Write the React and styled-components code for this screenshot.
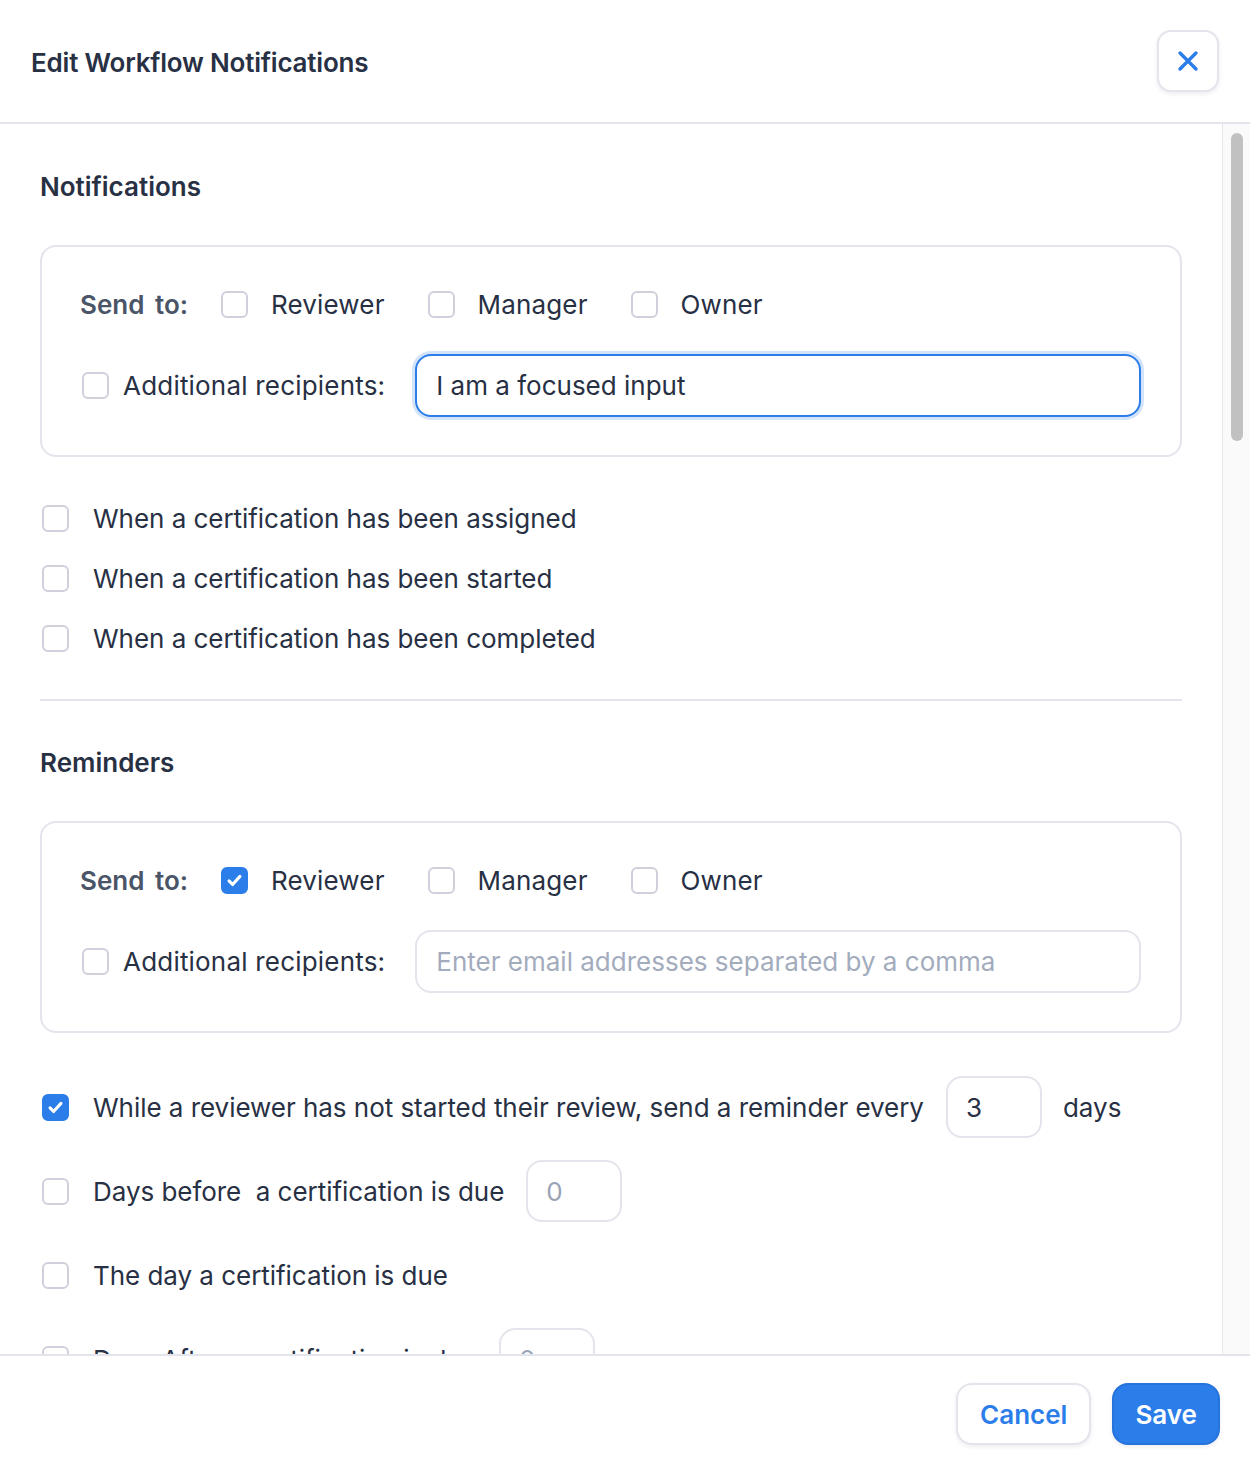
import React, { useState } from "react";
import styled, { createGlobalStyle } from "styled-components";

const blue = "#2b7de9";
const ink = "#283044";
const line = "#e4e4ec";

const GlobalStyle = createGlobalStyle`
  html, body {
    margin: 0;
    padding: 0;
    background: #ffffff;
  }
  body {
    font-family: Inter, "Noto Sans", sans-serif;
    color: ${ink};
  }
  * {
    box-sizing: border-box;
  }
`;

const Modal = styled.div`
  width: 1250px;
  height: 1474px;
  display: flex;
  flex-direction: column;
  background: #fff;
`;

const Header = styled.header`
  height: 124px;
  flex-shrink: 0;
  display: flex;
  align-items: center;
  justify-content: space-between;
  padding: 0 31px;
  border-bottom: 2px solid ${line};
`;

const Title = styled.h1`
  margin: 3px 0 0;
  font-size: 26px;
  font-weight: 600;
  letter-spacing: -0.2px;
  color: ${ink};
`;

const CloseButton = styled.button`
  width: 62px;
  height: 62px;
  display: flex;
  align-items: center;
  justify-content: center;
  border: 2px solid ${line};
  border-radius: 14px;
  background: #fff;
  box-shadow: 0 2px 4px rgba(20, 30, 60, 0.08);
  color: ${blue};
  padding: 0;
`;

const Main = styled.div`
  flex: 1;
  min-height: 0;
  display: flex;
`;

const Body = styled.div`
  flex: 1;
  overflow: hidden;
`;

/* custom scrollbar rail, the thumb sits at the top since the view is unscrolled */
const ScrollTrack = styled.div`
  width: 28px;
  flex-shrink: 0;
  background: #fafafa;
  border-left: 1px solid #e8e8e8;
  padding: 9px 7px 0 8px;
`;

const ScrollThumb = styled.div`
  height: 308px;
  border-radius: 6px;
  background: #c1c1c1;
`;

const Form = styled.div`
  padding: 47px 40px 0;
  display: flex;
  flex-direction: column;
`;

const SectionTitle = styled.h2`
  margin: 0 0 42px;
  font-size: 26px;
  line-height: 32px;
  font-weight: 600;
  color: ${ink};
`;

const RecipientCard = styled.div`
  border: 2px solid ${line};
  border-radius: 16px;
  padding: 44px 39px 38px 38px;
  display: flex;
  flex-direction: column;
  gap: 36px;
`;

const SendRow = styled.div`
  display: flex;
  align-items: center;
  height: 27px;
`;

const SendLabel = styled.span`
  font-size: 26px;
  font-weight: 600;
  color: #4a5568;
  word-spacing: 4px;
  margin-right: 33px;
`;

const Choice = styled.label`
  display: flex;
  align-items: center;
  gap: 23px;
  margin-right: 43px;
  font-size: 26px;
  letter-spacing: 0.15px;
  color: ${ink};
`;

const Box = styled.span`
  width: 27px;
  height: 27px;
  flex-shrink: 0;
  border-radius: 6px;
  border: 2px solid ${(p) => (p.$checked ? blue : "#cfd0dc")};
  background: ${(p) => (p.$checked ? blue : "#fff")};
  display: flex;
  align-items: center;
  justify-content: center;
  margin-left: ${(p) => p.$inset || 0}px;
`;

const ExtraRow = styled.div`
  display: flex;
  align-items: center;
`;

const ExtraLabel = styled.label`
  display: flex;
  align-items: center;
  gap: 14px;
  font-size: 26px;
  letter-spacing: 0.2px;
  margin-right: 30px;
  white-space: nowrap;
`;

const TextInput = styled.input`
  flex: 1;
  height: 63px;
  border-radius: 16px;
  border: 2px solid ${(p) => (p.$focused ? blue : line)};
  box-shadow: ${(p) => (p.$focused ? "0 0 0 3px #d3e3f9" : "none")};
  padding: 0 19px;
  font-family: inherit;
  font-size: 26px;
  color: ${ink};
  background: #fff;
  outline: none;

  &::placeholder {
    color: #a3acbd;
  }
`;

const EventList = styled.div`
  display: flex;
  flex-direction: column;
  gap: ${(p) => p.$gap}px;
  margin-top: 43px;
`;

const EventRow = styled.label`
  display: flex;
  align-items: center;
  min-height: ${(p) => p.$height}px;
  font-size: 26px;
  color: ${ink};
  white-space: pre;
`;

const RowText = styled.span`
  margin-left: 24px;
  letter-spacing: -0.04px;
`;

const NumberInput = styled.input`
  width: 96px;
  height: 62px;
  margin: 0 21px 0 22px;
  border-radius: 16px;
  border: 2px solid ${line};
  padding: 0 18px;
  font-family: inherit;
  font-size: 26px;
  color: ${ink};
  background: #fff;
  outline: none;

  &::placeholder {
    color: #9aa3b5;
  }
`;

const Divider = styled.hr`
  border: none;
  border-top: 2px solid ${line};
  margin: 43px 0 46px;
`;

const Footer = styled.footer`
  height: 120px;
  flex-shrink: 0;
  border-top: 2px solid ${line};
  display: flex;
  align-items: center;
  justify-content: flex-end;
  gap: 21px;
  padding: 0 30px 2px;
`;

const Button = styled.button`
  height: 62px;
  padding: 0 ${(p) => (p.$primary ? 21 : 22)}px;
  border-radius: 16px;
  font-family: inherit;
  font-size: 26px;
  font-weight: 600;
  border: 2px solid ${(p) => (p.$primary ? "#2673dc" : line)};
  background: ${(p) => (p.$primary ? blue : "#fff")};
  color: ${(p) => (p.$primary ? "#fff" : blue)};
  box-shadow: 0 2px 4px rgba(20, 30, 60, 0.08);
`;

function Check({ checked, inset }) {
  return (
    <Box $checked={checked} $inset={inset}>
      {checked && (
        <svg width="19" height="19" viewBox="0 0 16 16" fill="none">
          <path
            d="M3.4 8.3l3 3.1 6.2-6.9"
            stroke="#fff"
            strokeWidth="2.6"
            strokeLinecap="round"
            strokeLinejoin="round"
          />
        </svg>
      )}
    </Box>
  );
}

function Recipients({ send, value, placeholder, focused }) {
  return (
    <RecipientCard>
      <SendRow>
        <SendLabel>Send to:</SendLabel>
        {["Reviewer", "Manager", "Owner"].map((who) => (
          <Choice key={who}>
            <Check checked={send.includes(who)} />
            {who}
          </Choice>
        ))}
      </SendRow>
      <ExtraRow>
        <ExtraLabel>
          <Check inset={2} />
          Additional recipients:
        </ExtraLabel>
        <TextInput
          $focused={focused}
          defaultValue={value}
          placeholder={placeholder}
        />
      </ExtraRow>
    </RecipientCard>
  );
}

const events = [
  "When a certification has been assigned",
  "When a certification has been started",
  "When a certification has been completed",
];

export default function App() {
  const [open] = useState(true);
  if (!open) return null;

  return (
    <>
      <GlobalStyle />
      <Modal>
        <Header>
          <Title>Edit Workflow Notifications</Title>
          <CloseButton aria-label="Close">
            <svg width="24" height="24" viewBox="0 0 24 24" fill="none">
              <path
                d="M4 4l16 16M20 4L4 20"
                stroke="currentColor"
                strokeWidth="3.4"
                strokeLinecap="round"
              />
            </svg>
          </CloseButton>
        </Header>

        <Main>
          <Body>
            <Form>
              <SectionTitle>Notifications</SectionTitle>
              <Recipients send={[]} value="I am a focused input" focused />
              <EventList $gap={24}>
                {events.map((text) => (
                  <EventRow key={text} $height={36}>
                    <Check inset={2} />
                    <RowText>{text}</RowText>
                  </EventRow>
                ))}
              </EventList>

              <Divider />

              <SectionTitle>Reminders</SectionTitle>
              <Recipients
                send={["Reviewer"]}
                placeholder="Enter email addresses separated by a comma"
              />
              <EventList $gap={22}>
                <EventRow $height={62}>
                  <Check checked inset={2} />
                  <RowText>
                    While a reviewer has not started their review, send a reminder every
                  </RowText>
                  <NumberInput defaultValue="3" />
                  days
                </EventRow>
                <EventRow $height={62}>
                  <Check inset={2} />
                  <RowText>Days before  a certification is due</RowText>
                  <NumberInput placeholder="0" />
                </EventRow>
                <EventRow $height={62}>
                  <Check inset={2} />
                  <RowText>The day a certification is due</RowText>
                </EventRow>
                <EventRow $height={62}>
                  <Check inset={2} />
                  <RowText>Days After a certification is due</RowText>
                  <NumberInput placeholder="0" />
                </EventRow>
              </EventList>
            </Form>
          </Body>
          <ScrollTrack>
            <ScrollThumb />
          </ScrollTrack>
        </Main>

        <Footer>
          <Button>Cancel</Button>
          <Button $primary>Save</Button>
        </Footer>
      </Modal>
    </>
  );
}
